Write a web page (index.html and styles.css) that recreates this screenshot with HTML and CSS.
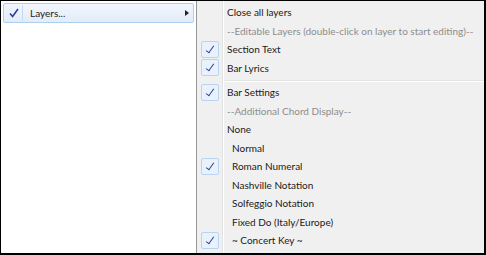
FILE: index.html
```html
<!DOCTYPE html>
<html lang="en">
<head>
    <meta charset="UTF-8">
    <title>Layers menu</title>
    <link rel="stylesheet" href="styles.css">
</head>
<body>

<div class="frame">
    <!-- parent menu -->
    <div class="menu">
        <div class="menu-item active">
            <span class="check-box"><svg width="12" height="12" viewBox="0 0 12 12"><path d="M2 6.5 L4.6 9.5 L10 2" fill="none" stroke="#2a3f9c" stroke-width="1.6"/></svg></span>
            <span class="label">Layers...</span>
            <span class="arrow"></span>
        </div>
    </div>

    <!-- submenu -->
    <div class="submenu">
        <div class="sub-item"><span class="icon"></span><span class="label">Close all layers</span></div>
        <div class="sub-item disabled"><span class="icon"></span><span class="label">--Editable Layers (double-click on layer to start editing)--</span></div>
        <div class="sub-item checked"><span class="icon"><span class="tick"></span></span><span class="label">Section Text</span></div>
        <div class="sub-item checked"><span class="icon"><span class="tick"></span></span><span class="label">Bar Lyrics</span></div>
        <div class="separator"></div>
        <div class="sub-item checked"><span class="icon"><span class="tick"></span></span><span class="label">Bar Settings</span></div>
        <div class="sub-item disabled"><span class="icon"></span><span class="label">--Additional Chord Display--</span></div>
        <div class="sub-item"><span class="icon"></span><span class="label">None</span></div>
        <div class="sub-item indent"><span class="icon"></span><span class="label">Normal</span></div>
        <div class="sub-item indent checked"><span class="icon"><span class="tick"></span></span><span class="label">Roman Numeral</span></div>
        <div class="sub-item indent"><span class="icon"></span><span class="label">Nashville Notation</span></div>
        <div class="sub-item indent"><span class="icon"></span><span class="label">Solfeggio Notation</span></div>
        <div class="sub-item indent"><span class="icon"></span><span class="label">Fixed Do (Italy/Europe)</span></div>
        <div class="sub-item indent checked"><span class="icon"><span class="tick"></span></span><span class="label">~ Concert Key ~</span></div>
    </div>
</div>

</body>
</html>
```

FILE: styles.css
```css
body {
    margin: 0;
    font-family: Lato, "Noto Sans", sans-serif;
    font-size: 10px;
    color: #1a1a1a;
}

.frame {
    width: 486px;
    height: 255px;
    box-sizing: border-box;
    border-top: 1px solid #000;
    border-left: 1px solid #000;
    border-right: 2px solid #000;
    border-bottom: 2px solid #000;
    display: flex;
    background: #fff;
    overflow: hidden;
}

.menu {
    width: 195px;
    flex: none;
    padding: 2px 2px 0 2px;
    box-sizing: border-box;
    background: #fff;
}

.menu-item {
    display: flex;
    align-items: center;
    height: 18px;
    border: 1px solid #aecff0;
    border-radius: 2px;
    background: linear-gradient(#f1f6fd, #e2ecf8);
}

.check-box {
    width: 17px;
    height: 16px;
    margin-left: 1px;
    display: flex;
    align-items: center;
    justify-content: center;
    border-right: 1px solid #c9daf0;
}

.menu-item .label {
    margin-left: 7px;
    flex: 1;
}

.arrow {
    width: 0;
    height: 0;
    border-top: 3.5px solid transparent;
    border-bottom: 3.5px solid transparent;
    border-left: 4px solid #222;
    margin-right: 4px;
}

.submenu {
    flex: 1;
    border-left: 1px solid #979797;
    background: #f0f0f0;
    background-image: linear-gradient(to right, transparent 25px, #e2e3e3 25px, #e2e3e3 26px, #fff 26px, #fff 27px, transparent 27px);
    padding-top: 2px;
}

.sub-item {
    display: flex;
    align-items: center;
    height: 18.5px;
}

.sub-item .icon {
    width: 26px;
    flex: none;
    display: flex;
    justify-content: center;
    align-items: center;
}

.sub-item .label {
    margin-left: 4px;
    white-space: nowrap;
}

.sub-item.indent .label {
    margin-left: 9px;
}

.sub-item.disabled {
    color: #8d8d8d;
}

.tick {
    width: 18px;
    height: 17px;
    box-sizing: border-box;
    border: 1px solid #b9d3f1;
    border-radius: 2px;
    background: #e9f1fc;
    display: block;
    position: relative;
}

.tick::after {
    content: "";
    position: absolute;
    left: 6px;
    top: 2px;
    width: 3px;
    height: 8px;
    border-right: 1.6px solid #2a3f9c;
    border-bottom: 1.6px solid #2a3f9c;
    transform: rotate(35deg);
}

.separator {
    height: 1px;
    margin: 3px 0 1px 28px;
    background: #e2e3e3;
    border-bottom: 1px solid #fff;
}
```
